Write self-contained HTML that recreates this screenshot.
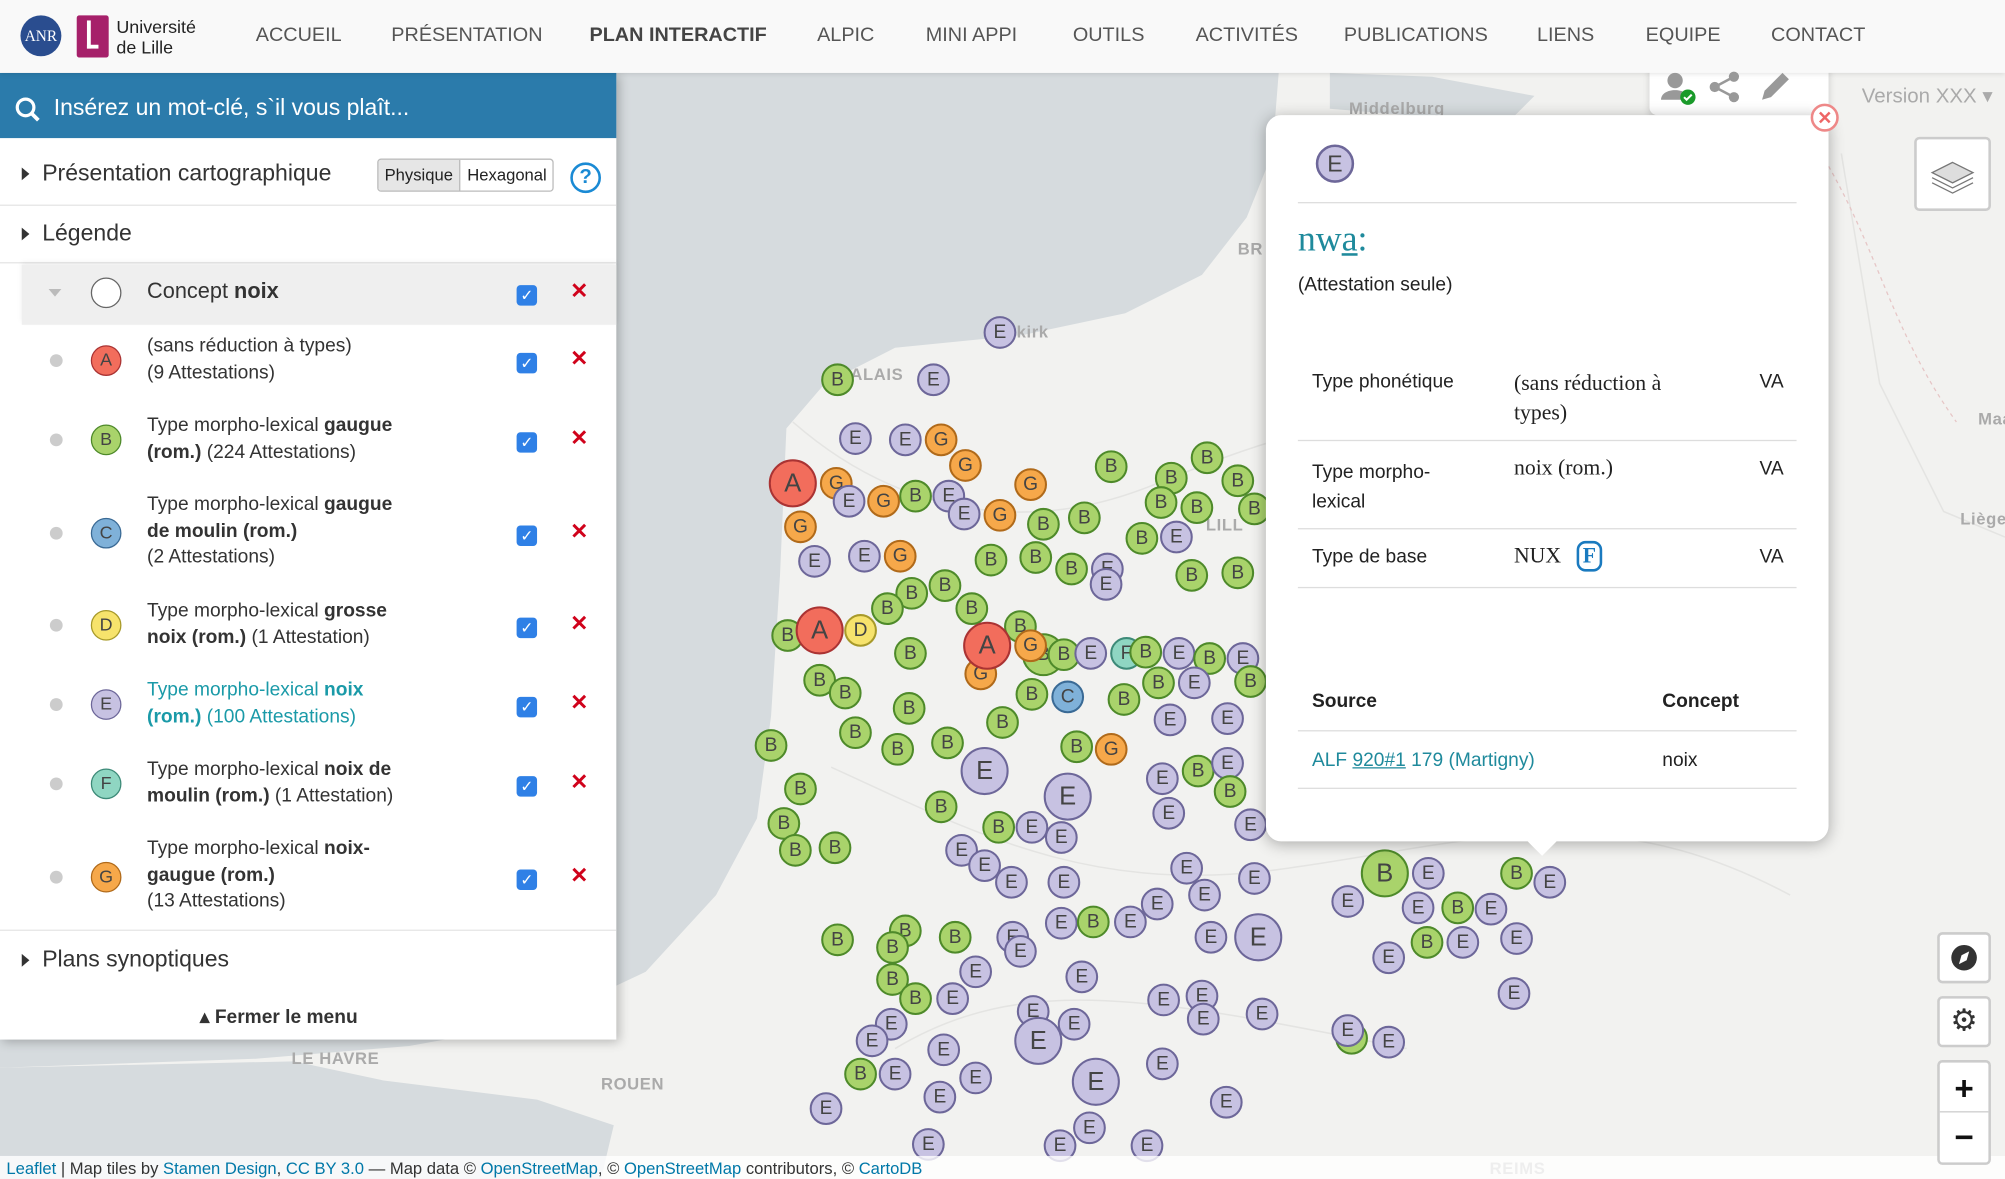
<!DOCTYPE html>
<html><head><meta charset="utf-8"><style>
*{box-sizing:border-box;margin:0;padding:0}
html,body{width:2005px;height:1178px;overflow:hidden;background:#f2f2f0;font-family:"Liberation Sans",sans-serif}
#w{position:absolute;left:0;top:0;width:1568px;height:922px;transform:scale(1.27870);transform-origin:0 0;overflow:hidden}
.abs{position:absolute}
#hdr{left:0;top:0;width:1568px;height:57px;background:#f9f9f9;box-shadow:0 1px 4px rgba(0,0,0,.12);z-index:5}
.nav{position:absolute;top:19px;font-size:15.5px;color:#555;white-space:nowrap}
#panel{left:0;top:57px;width:482px;height:756px;background:#fff;box-shadow:2px 2px 8px rgba(0,0,0,.25);z-index:4}
#search{height:51px;background:#2b7bab;color:#fff;font-size:18px;padding:17px 0 0 42px;position:relative}
.sec{position:absolute;left:33px;font-size:18px;color:#333}
.tri{position:absolute;left:17px;width:0;height:0;border-top:5px solid transparent;border-bottom:5px solid transparent;border-left:6px solid #333}
.hr{position:absolute;left:0;width:482px;height:1px;background:#e5e5e5}
.item{position:absolute;left:0;width:482px;font-size:15px;color:#333;line-height:20.5px}
.item .dot{position:absolute;left:39px;width:10px;height:10px;border-radius:50%;background:#ccc}
.item .c{position:absolute;left:71px;width:24px;height:24px;border-radius:50%;border:1.5px solid #555;font-size:14px;text-align:center;line-height:21px;color:#444}
.item .t{position:absolute;left:115px;width:214px}
.cb{position:absolute;left:404px;width:16px;height:16px;border-radius:3px;background:#2f80e6;color:#fff;font-size:12px;text-align:center;line-height:16px}
.x{position:absolute;left:446px;color:#d0021b;font-weight:bold;font-size:17px}
b{font-weight:bold}
#pop{left:990px;top:90px;width:440px;height:568px;background:#fff;border-radius:12px;box-shadow:0 2px 12px rgba(0,0,0,.3);z-index:3;font-size:15px;color:#222}
#pop .l{position:absolute;left:25px;width:390px;height:1px;background:#ddd}
.sf{font-family:"Liberation Serif",serif;font-size:17px}
.btn{position:absolute;background:#fff;border:2px solid rgba(0,0,0,.2);border-radius:4px;z-index:3}
svg text{font-family:"Liberation Sans",sans-serif}
.m circle{stroke-width:1.6}
.m text{font-size:15px;text-anchor:middle;dominant-baseline:central;fill:#444}
.A circle{fill:#f26d5c;stroke:#a33}
.B circle{fill:#a9d36b;stroke:#4e8a2a}
.C circle{fill:#7fb1d9;stroke:#3a6a95}
.D circle{fill:#f7e36c;stroke:#a89a2a}
.E circle{fill:#c7c2e2;stroke:#6d6799}
.F circle{fill:#8fd6c2;stroke:#3d8a78}
.G circle{fill:#f6a84a;stroke:#b06a1a}
.lbl{font-size:13px;fill:#aaa;font-weight:bold;letter-spacing:.5px}
</style></head><body><div id="w">

<svg class="abs" style="left:0;top:0" width="1568" height="922">
<rect width="1568" height="922" fill="#f2f2f0"/>
<path d="M0,57 L1000,57 L995,120 L975,170 L940,215 L880,245 L800,262 L700,272 L645,300 L615,335 L610,450 L603,560 L592,640 L560,700 L505,760 L420,800 L320,818 L200,828 L0,835 Z" fill="#d6dbde"/>
<path d="M0,835 L230,830 L300,845 L420,860 L480,880 L470,922 L0,922Z" fill="#d6dbde"/>
<path d="M1040,57 L1120,60 L1200,75 L1180,95 L1100,90 L1040,85Z" fill="#d6dbde"/>
<g stroke="#e4e4e2" fill="none" stroke-width="1.2"><path d="M620,330 C700,400 800,420 900,380 S1100,300 1250,350"/><path d="M650,600 C760,650 850,700 1000,680 S1250,620 1400,700"/><path d="M700,820 C800,760 900,780 1100,820"/><path d="M1440,120 L1470,300 L1520,400 L1568,420"/></g>
<path d="M1430,130 C1470,200 1480,260 1530,330 C1545,360 1568,360" stroke="#e6c6c6" fill="none" stroke-dasharray="3 3"/>
<text class="lbl" x="228" y="832">LE HAVRE</text><text class="lbl" x="470" y="852">ROUEN</text><text class="lbl" x="1165" y="918">REIMS</text><text class="lbl" x="1533" y="410">Liège</text><text class="lbl" x="1055" y="89">Middelburg</text><text class="lbl" x="968" y="199">BR</text><text class="lbl" x="665" y="297">ALAIS</text><text class="lbl" x="795" y="264">kirk</text><text class="lbl" x="1547" y="332">Maa</text><text class="lbl" x="943" y="415">LILL</text>
<g class="m">
<g class="E" transform="translate(782,260)"><circle r="12"/><text>E</text></g>
<g class="B" transform="translate(655,297)"><circle r="12"/><text>B</text></g>
<g class="E" transform="translate(730,297)"><circle r="12"/><text>E</text></g>
<g class="E" transform="translate(669,343)"><circle r="12"/><text>E</text></g>
<g class="E" transform="translate(708,344)"><circle r="12"/><text>E</text></g>
<g class="G" transform="translate(736,344)"><circle r="12"/><text>G</text></g>
<g class="G" transform="translate(755,364)"><circle r="12"/><text>G</text></g>
<g class="G" transform="translate(654,378)"><circle r="12"/><text>G</text></g>
<g class="E" transform="translate(664,392)"><circle r="12"/><text>E</text></g>
<g class="G" transform="translate(691,392)"><circle r="12"/><text>G</text></g>
<g class="B" transform="translate(716,388)"><circle r="12"/><text>B</text></g>
<g class="E" transform="translate(742,388)"><circle r="12"/><text>E</text></g>
<g class="E" transform="translate(754,402)"><circle r="12"/><text>E</text></g>
<g class="G" transform="translate(782,403)"><circle r="12"/><text>G</text></g>
<g class="G" transform="translate(806,379)"><circle r="12"/><text>G</text></g>
<g class="B" transform="translate(869,365)"><circle r="12"/><text>B</text></g>
<g class="B" transform="translate(944,358)"><circle r="12"/><text>B</text></g>
<g class="B" transform="translate(916,374)"><circle r="12"/><text>B</text></g>
<g class="B" transform="translate(968,376)"><circle r="12"/><text>B</text></g>
<g class="B" transform="translate(936,397)"><circle r="12"/><text>B</text></g>
<g class="B" transform="translate(908,393)"><circle r="12"/><text>B</text></g>
<g class="B" transform="translate(981,398)"><circle r="12"/><text>B</text></g>
<g class="B" transform="translate(816,410)"><circle r="12"/><text>B</text></g>
<g class="B" transform="translate(848,405)"><circle r="12"/><text>B</text></g>
<g class="G" transform="translate(626,412)"><circle r="12"/><text>G</text></g>
<g class="E" transform="translate(637,439)"><circle r="12"/><text>E</text></g>
<g class="E" transform="translate(676,435)"><circle r="12"/><text>E</text></g>
<g class="G" transform="translate(704,435)"><circle r="12"/><text>G</text></g>
<g class="B" transform="translate(775,438)"><circle r="12"/><text>B</text></g>
<g class="B" transform="translate(810,436)"><circle r="12"/><text>B</text></g>
<g class="B" transform="translate(838,445)"><circle r="12"/><text>B</text></g>
<g class="E" transform="translate(866,445)"><circle r="12"/><text>E</text></g>
<g class="E" transform="translate(865,457)"><circle r="12"/><text>E</text></g>
<g class="B" transform="translate(893,421)"><circle r="12"/><text>B</text></g>
<g class="E" transform="translate(920,420)"><circle r="12"/><text>E</text></g>
<g class="B" transform="translate(932,450)"><circle r="12"/><text>B</text></g>
<g class="B" transform="translate(968,448)"><circle r="12"/><text>B</text></g>
<g class="B" transform="translate(739,458)"><circle r="12"/><text>B</text></g>
<g class="B" transform="translate(713,464)"><circle r="12"/><text>B</text></g>
<g class="B" transform="translate(694,476)"><circle r="12"/><text>B</text></g>
<g class="B" transform="translate(760,476)"><circle r="12"/><text>B</text></g>
<g class="B" transform="translate(616,497)"><circle r="12"/><text>B</text></g>
<g class="D" transform="translate(673,493)"><circle r="12"/><text>D</text></g>
<g class="B" transform="translate(712,511)"><circle r="12"/><text>B</text></g>
<g class="B" transform="translate(798,490)"><circle r="12"/><text>B</text></g>
<g class="B" transform="translate(816,512)"><circle r="16"/><text>B</text></g>
<g class="G" transform="translate(767,527)"><circle r="12"/><text>G</text></g>
<g class="G" transform="translate(806,505)"><circle r="12"/><text>G</text></g>
<g class="B" transform="translate(832,512)"><circle r="12"/><text>B</text></g>
<g class="E" transform="translate(853,511)"><circle r="12"/><text>E</text></g>
<g class="F" transform="translate(881,511)"><circle r="12"/><text>F</text></g>
<g class="B" transform="translate(896,510)"><circle r="12"/><text>B</text></g>
<g class="E" transform="translate(922,511)"><circle r="12"/><text>E</text></g>
<g class="B" transform="translate(946,515)"><circle r="12"/><text>B</text></g>
<g class="E" transform="translate(972,515)"><circle r="12"/><text>E</text></g>
<g class="B" transform="translate(641,532)"><circle r="12"/><text>B</text></g>
<g class="B" transform="translate(661,542)"><circle r="12"/><text>B</text></g>
<g class="B" transform="translate(711,554)"><circle r="12"/><text>B</text></g>
<g class="B" transform="translate(807,543)"><circle r="12"/><text>B</text></g>
<g class="C" transform="translate(835,545)"><circle r="12"/><text>C</text></g>
<g class="B" transform="translate(879,547)"><circle r="12"/><text>B</text></g>
<g class="B" transform="translate(906,534)"><circle r="12"/><text>B</text></g>
<g class="E" transform="translate(934,534)"><circle r="12"/><text>E</text></g>
<g class="E" transform="translate(915,563)"><circle r="12"/><text>E</text></g>
<g class="E" transform="translate(960,562)"><circle r="12"/><text>E</text></g>
<g class="B" transform="translate(978,533)"><circle r="12"/><text>B</text></g>
<g class="B" transform="translate(784,565)"><circle r="12"/><text>B</text></g>
<g class="B" transform="translate(603,583)"><circle r="12"/><text>B</text></g>
<g class="B" transform="translate(669,573)"><circle r="12"/><text>B</text></g>
<g class="B" transform="translate(702,586)"><circle r="12"/><text>B</text></g>
<g class="B" transform="translate(741,581)"><circle r="12"/><text>B</text></g>
<g class="B" transform="translate(842,584)"><circle r="12"/><text>B</text></g>
<g class="G" transform="translate(869,586)"><circle r="12"/><text>G</text></g>
<g class="B" transform="translate(626,617)"><circle r="12"/><text>B</text></g>
<g class="B" transform="translate(736,631)"><circle r="12"/><text>B</text></g>
<g class="B" transform="translate(781,647)"><circle r="12"/><text>B</text></g>
<g class="E" transform="translate(807,647)"><circle r="12"/><text>E</text></g>
<g class="E" transform="translate(909,609)"><circle r="12"/><text>E</text></g>
<g class="B" transform="translate(937,603)"><circle r="12"/><text>B</text></g>
<g class="E" transform="translate(960,597)"><circle r="12"/><text>E</text></g>
<g class="B" transform="translate(962,619)"><circle r="12"/><text>B</text></g>
<g class="E" transform="translate(914,636)"><circle r="12"/><text>E</text></g>
<g class="E" transform="translate(978,645)"><circle r="12"/><text>E</text></g>
<g class="B" transform="translate(613,644)"><circle r="12"/><text>B</text></g>
<g class="B" transform="translate(622,665)"><circle r="12"/><text>B</text></g>
<g class="B" transform="translate(653,663)"><circle r="12"/><text>B</text></g>
<g class="E" transform="translate(752,665)"><circle r="12"/><text>E</text></g>
<g class="E" transform="translate(830,655)"><circle r="12"/><text>E</text></g>
<g class="E" transform="translate(770,677)"><circle r="12"/><text>E</text></g>
<g class="E" transform="translate(791,690)"><circle r="12"/><text>E</text></g>
<g class="E" transform="translate(832,690)"><circle r="12"/><text>E</text></g>
<g class="E" transform="translate(928,679)"><circle r="12"/><text>E</text></g>
<g class="E" transform="translate(942,700)"><circle r="12"/><text>E</text></g>
<g class="E" transform="translate(981,687)"><circle r="12"/><text>E</text></g>
<g class="B" transform="translate(655,735)"><circle r="12"/><text>B</text></g>
<g class="B" transform="translate(708,728)"><circle r="12"/><text>B</text></g>
<g class="B" transform="translate(698,741)"><circle r="12"/><text>B</text></g>
<g class="B" transform="translate(747,733)"><circle r="12"/><text>B</text></g>
<g class="E" transform="translate(792,733)"><circle r="12"/><text>E</text></g>
<g class="E" transform="translate(798,744)"><circle r="12"/><text>E</text></g>
<g class="E" transform="translate(830,722)"><circle r="12"/><text>E</text></g>
<g class="B" transform="translate(855,721)"><circle r="12"/><text>B</text></g>
<g class="E" transform="translate(884,721)"><circle r="12"/><text>E</text></g>
<g class="E" transform="translate(905,707)"><circle r="12"/><text>E</text></g>
<g class="E" transform="translate(947,733)"><circle r="12"/><text>E</text></g>
<g class="E" transform="translate(763,760)"><circle r="12"/><text>E</text></g>
<g class="B" transform="translate(698,766)"><circle r="12"/><text>B</text></g>
<g class="B" transform="translate(716,781)"><circle r="12"/><text>B</text></g>
<g class="E" transform="translate(745,781)"><circle r="12"/><text>E</text></g>
<g class="E" transform="translate(846,764)"><circle r="12"/><text>E</text></g>
<g class="E" transform="translate(808,791)"><circle r="12"/><text>E</text></g>
<g class="E" transform="translate(840,801)"><circle r="12"/><text>E</text></g>
<g class="E" transform="translate(910,782)"><circle r="12"/><text>E</text></g>
<g class="E" transform="translate(940,779)"><circle r="12"/><text>E</text></g>
<g class="E" transform="translate(941,797)"><circle r="12"/><text>E</text></g>
<g class="E" transform="translate(987,793)"><circle r="12"/><text>E</text></g>
<g class="E" transform="translate(697,801)"><circle r="12"/><text>E</text></g>
<g class="E" transform="translate(682,814)"><circle r="12"/><text>E</text></g>
<g class="E" transform="translate(738,821)"><circle r="12"/><text>E</text></g>
<g class="B" transform="translate(673,840)"><circle r="12"/><text>B</text></g>
<g class="E" transform="translate(700,840)"><circle r="12"/><text>E</text></g>
<g class="E" transform="translate(763,843)"><circle r="12"/><text>E</text></g>
<g class="E" transform="translate(735,858)"><circle r="12"/><text>E</text></g>
<g class="E" transform="translate(909,832)"><circle r="12"/><text>E</text></g>
<g class="E" transform="translate(959,862)"><circle r="12"/><text>E</text></g>
<g class="E" transform="translate(646,867)"><circle r="12"/><text>E</text></g>
<g class="E" transform="translate(726,895)"><circle r="12"/><text>E</text></g>
<g class="E" transform="translate(829,896)"><circle r="12"/><text>E</text></g>
<g class="E" transform="translate(852,882)"><circle r="12"/><text>E</text></g>
<g class="E" transform="translate(897,896)"><circle r="12"/><text>E</text></g>
<g class="E" transform="translate(1054,705)"><circle r="12"/><text>E</text></g>
<g class="E" transform="translate(1117,683)"><circle r="12"/><text>E</text></g>
<g class="E" transform="translate(1109,710)"><circle r="12"/><text>E</text></g>
<g class="B" transform="translate(1140,710)"><circle r="12"/><text>B</text></g>
<g class="E" transform="translate(1166,711)"><circle r="12"/><text>E</text></g>
<g class="B" transform="translate(1116,737)"><circle r="12"/><text>B</text></g>
<g class="E" transform="translate(1144,737)"><circle r="12"/><text>E</text></g>
<g class="E" transform="translate(1186,734)"><circle r="12"/><text>E</text></g>
<g class="E" transform="translate(1086,749)"><circle r="12"/><text>E</text></g>
<g class="B" transform="translate(1186,683)"><circle r="12"/><text>B</text></g>
<g class="E" transform="translate(1212,690)"><circle r="12"/><text>E</text></g>
<g class="E" transform="translate(1184,777)"><circle r="12"/><text>E</text></g>
<g class="B" transform="translate(1057,812)"><circle r="12"/><text>B</text></g>
<g class="E" transform="translate(1054,806)"><circle r="12"/><text>E</text></g>
<g class="E" transform="translate(1086,815)"><circle r="12"/><text>E</text></g>
<g class="A" transform="translate(620,378)"><circle r="18"/><text style="font-size:20px">A</text></g>
<g class="A" transform="translate(641,493)"><circle r="18"/><text style="font-size:20px">A</text></g>
<g class="A" transform="translate(772,505)"><circle r="18"/><text style="font-size:20px">A</text></g>
<g class="E" transform="translate(770,603)"><circle r="18"/><text style="font-size:20px">E</text></g>
<g class="E" transform="translate(835,623)"><circle r="18"/><text style="font-size:20px">E</text></g>
<g class="E" transform="translate(984,733)"><circle r="18"/><text style="font-size:20px">E</text></g>
<g class="E" transform="translate(812,814)"><circle r="18"/><text style="font-size:20px">E</text></g>
<g class="E" transform="translate(857,846)"><circle r="18"/><text style="font-size:20px">E</text></g>
<g class="B" transform="translate(1083,683)"><circle r="18"/><text style="font-size:20px">B</text></g>
</g>
<rect x="0" y="904" width="1568" height="18" fill="rgba(255,255,255,.8)"/>
<text x="5" y="918" font-size="13" fill="#333"><tspan fill="#0078a8">Leaflet</tspan> | Map tiles by <tspan fill="#0078a8">Stamen Design</tspan>, <tspan fill="#0078a8">CC BY 3.0</tspan> — Map data © <tspan fill="#0078a8">OpenStreetMap</tspan>, © <tspan fill="#0078a8">OpenStreetMap</tspan> contributors, © <tspan fill="#0078a8">CartoDB</tspan></text>
</svg>

<div id="hdr" class="abs">
<div class="abs" style="left:16px;top:12px;width:32px;height:32px;border-radius:50%;background:#2a4d8f;color:#fff;font-family:'Liberation Serif',serif;font-size:12px;text-align:center;line-height:32px">ANR</div>
<div class="abs" style="left:60px;top:12px;width:25px;height:33px;background:#a6206a;border-radius:2px"><div class="abs" style="left:8px;top:4px;width:9px;height:22px;border-left:3px solid #fff;border-bottom:3px solid #fff"></div></div>
<div class="abs" style="left:91px;top:13px;font-size:14px;line-height:16px;color:#222">Université<br>de Lille</div>
<span class="nav" style="left:200px">ACCUEIL</span><span class="nav" style="left:306px">PRÉSENTATION</span><span class="nav" style="left:461px;font-weight:bold;color:#444">PLAN INTERACTIF</span><span class="nav" style="left:639px">ALPIC</span><span class="nav" style="left:724px">MINI APPI</span><span class="nav" style="left:839px">OUTILS</span><span class="nav" style="left:935px">ACTIVITÉS</span><span class="nav" style="left:1051px">PUBLICATIONS</span><span class="nav" style="left:1202px">LIENS</span><span class="nav" style="left:1287px">EQUIPE</span><span class="nav" style="left:1385px">CONTACT</span>
</div>

<div id="panel" class="abs">
<div id="search"><svg class="abs" style="left:12px;top:19px" width="20" height="20"><circle cx="8" cy="8" r="6.5" stroke="#fff" stroke-width="2.5" fill="none"/><path d="M13,13 L18,18" stroke="#fff" stroke-width="3"/></svg>Insérez un mot-clé, s`il vous plaît...</div>
<div class="tri" style="top:74px"></div><div class="sec" style="top:68px">Présentation cartographique</div>
<div class="abs" style="left:295px;top:67px;width:138px;height:26px;border:1px solid #bbb;border-radius:3px;font-size:13px;color:#222;overflow:hidden"><div class="abs" style="left:0;top:0;width:64px;height:24px;background:#e6e6e6;border-right:1px solid #bbb;text-align:center;line-height:24px">Physique</div><div class="abs" style="left:64px;top:0;width:73px;height:24px;text-align:center;line-height:24px">Hexagonal</div></div>
<div class="abs" style="left:446px;top:70px;width:24px;height:24px;border:2.5px solid #1a8ad4;border-radius:50%;color:#1a8ad4;font-weight:bold;font-size:16px;text-align:center;line-height:19px">?</div>
<div class="hr" style="top:103px"></div>
<div class="tri" style="top:121px"></div><div class="sec" style="top:115px">Légende</div>
<div class="hr" style="top:148px"></div>
<div class="abs" style="left:17px;top:150px;width:465px;height:47px;background:#efefef;box-shadow:0 -2px 4px rgba(0,0,0,.06)"></div>
<div class="item" style="top:161px"><div class="abs" style="left:38px;top:8px;border-left:5px solid transparent;border-right:5px solid transparent;border-top:6px solid #bbb"></div><div class="c" style="top:-1px;background:#fff;border-color:#666"></div><div class="t" style="font-size:17px">Concept <b>noix</b></div><div class="cb" style="top:5px">✓</div><div class="x" style="top:0">✕</div></div>
<div class="item" style="top:204px"><div class="dot" style="top:16px"></div><div class="c" style="top:9px;background:#f26d5c;border-color:#a33">A</div><div class="t">(sans réduction à types)<br>(9 Attestations)</div><div class="cb" style="top:15px">✓</div><div class="x" style="top:10px">✕</div></div>
<div class="item" style="top:266px"><div class="dot" style="top:16px"></div><div class="c" style="top:9px;background:#a9d36b;border-color:#4e8a2a">B</div><div class="t">Type morpho-lexical <b>gaugue (rom.)</b> (224 Attestations)</div><div class="cb" style="top:15px">✓</div><div class="x" style="top:10px">✕</div></div>
<div class="item" style="top:328px"><div class="dot" style="top:27px"></div><div class="c" style="top:20px;background:#7fb1d9;border-color:#3a6a95">C</div><div class="t">Type morpho-lexical <b>gaugue<br>de moulin (rom.)</b><br>(2 Attestations)</div><div class="cb" style="top:26px">✓</div><div class="x" style="top:21px">✕</div></div>
<div class="item" style="top:411px"><div class="dot" style="top:16px"></div><div class="c" style="top:9px;background:#f7e36c;border-color:#a89a2a">D</div><div class="t">Type morpho-lexical <b>grosse<br>noix (rom.)</b> (1 Attestation)</div><div class="cb" style="top:15px">✓</div><div class="x" style="top:10px">✕</div></div>
<div class="item" style="top:473px"><div class="dot" style="top:16px"></div><div class="c" style="top:9px;background:#c7c2e2;border-color:#6d6799">E</div><div class="t" style="color:#1a9aa8">Type morpho-lexical <b>noix<br>(rom.)</b> (100 Attestations)</div><div class="cb" style="top:15px">✓</div><div class="x" style="top:10px">✕</div></div>
<div class="item" style="top:535px"><div class="dot" style="top:16px"></div><div class="c" style="top:9px;background:#8fd6c2;border-color:#3d8a78">F</div><div class="t">Type morpho-lexical <b>noix de<br>moulin (rom.)</b> (1 Attestation)</div><div class="cb" style="top:15px">✓</div><div class="x" style="top:10px">✕</div></div>
<div class="item" style="top:597px"><div class="dot" style="top:27px"></div><div class="c" style="top:20px;background:#f6a84a;border-color:#b06a1a">G</div><div class="t">Type morpho-lexical <b>noix-<br>gaugue (rom.)</b><br>(13 Attestations)</div><div class="cb" style="top:26px">✓</div><div class="x" style="top:21px">✕</div></div>
<div class="hr" style="top:670px"></div>
<div class="tri" style="top:689px"></div><div class="sec" style="top:683px">Plans synoptiques</div>
<div class="abs" style="left:0;top:729px;width:436px;text-align:center;font-size:15px;font-weight:bold;color:#333">▴ Fermer le menu</div>
</div>

<div class="abs" style="left:1290px;top:50px;width:140px;height:40px;background:#fff;box-shadow:0 3px 6px rgba(0,0,0,.15);border-radius:0 0 6px 6px;z-index:2"></div>
<svg class="abs" style="left:1296px;top:54px;z-index:6" width="110" height="32">
<circle cx="14" cy="9" r="6" fill="#999"/><path d="M3,24 C3,14 25,14 25,24Z" fill="#999"/><circle cx="24" cy="22" r="6" fill="#1a9a2a"/><path d="M21,22 l2,2 l4,-4" stroke="#fff" stroke-width="1.6" fill="none"/>
<circle cx="45" cy="14" r="4" fill="#999"/><circle cx="60" cy="6" r="4" fill="#999"/><circle cx="60" cy="22" r="4" fill="#999"/><path d="M45,14 L60,6 M45,14 L60,22" stroke="#999" stroke-width="2"/>
<path d="M82,24 L84,17 L98,3 L103,8 L89,22Z" fill="#999"/>
</svg>
<div class="abs" style="left:1456px;top:65px;font-size:16px;color:#aaa;z-index:2">Version XXX ▾</div>

<div id="pop" class="abs">
<svg class="abs" style="left:38px;top:22px" width="34" height="34"><circle cx="16" cy="16" r="14" fill="#c7c2e2" stroke="#6d6799" stroke-width="2"/><text x="16" y="22" text-anchor="middle" font-size="18" fill="#444">E</text></svg>
<div class="l" style="top:68px"></div>
<div class="abs sf" style="left:25px;top:82px;font-size:28px;color:#1f8a9c">nw<u>a</u>:</div>
<div class="abs" style="left:25px;top:124px;font-size:15px">(Attestation seule)</div>
<div class="abs" style="left:36px;top:200px">Type phonétique</div><div class="abs sf" style="left:194px;top:198px;line-height:23px;width:160px">(sans réduction à types)</div><div class="abs" style="left:386px;top:200px">VA</div>
<div class="l" style="top:254px"></div>
<div class="abs" style="left:36px;top:268px;line-height:23px;width:120px">Type morpho-lexical</div><div class="abs sf" style="left:194px;top:266px">noix (rom.)</div><div class="abs" style="left:386px;top:268px">VA</div>
<div class="l" style="top:323px"></div>
<div class="abs" style="left:36px;top:337px">Type de base</div><div class="abs sf" style="left:194px;top:335px">NUX</div><div class="abs sf" style="left:243px;top:333px;width:20px;height:24px;border:2px solid #1a7abf;border-radius:7px;color:#1a7abf;font-weight:bold;text-align:center;line-height:20px">F</div><div class="abs" style="left:386px;top:337px">VA</div>
<div class="l" style="top:369px"></div>
<div class="abs" style="left:36px;top:450px;font-weight:bold">Source</div><div class="abs" style="left:310px;top:450px;font-weight:bold">Concept</div>
<div class="l" style="top:481px"></div>
<div class="abs" style="left:36px;top:496px;color:#1f8a9c">ALF <u>920#1</u> 179 (Martigny)</div><div class="abs" style="left:310px;top:496px">noix</div>
<div class="l" style="top:526px"></div>
<div class="abs" style="left:208px;top:560px;width:16px;height:16px;background:#fff;transform:rotate(45deg)"></div>
</div>
<div class="abs" style="left:1416px;top:81px;width:22px;height:22px;border:2px solid #e88;border-radius:50%;background:#fff;color:#e66;font-size:14px;font-weight:bold;text-align:center;line-height:18px;z-index:4">✕</div>

<div class="btn" style="left:1497px;top:107px;width:60px;height:58px"><svg width="56" height="54"><path d="M28,18 L44,26 L28,34 L12,26Z" fill="#ddd" stroke="#777"/><path d="M12,30 L28,38 L44,30" fill="none" stroke="#777"/><path d="M12,34 L28,42 L44,34" fill="none" stroke="#777"/></svg></div>
<div class="btn" style="left:1515px;top:729px;width:42px;height:40px"><svg width="38" height="36"><circle cx="19" cy="18" r="10" fill="#333"/><path d="M23,13 L21,20 L15,23 L17,16Z" fill="#fff"/></svg></div>
<div class="btn" style="left:1515px;top:779px;width:42px;height:40px;text-align:center;font-size:24px;line-height:36px;color:#333">⚙</div>
<div class="btn" style="left:1515px;top:829px;width:42px;height:82px"><div style="height:39px;border-bottom:1px solid #ccc;text-align:center;font-size:26px;font-weight:bold;line-height:40px;color:#111">+</div><div style="text-align:center;font-size:26px;font-weight:bold;line-height:38px;color:#111">−</div></div>

</div></body></html>
